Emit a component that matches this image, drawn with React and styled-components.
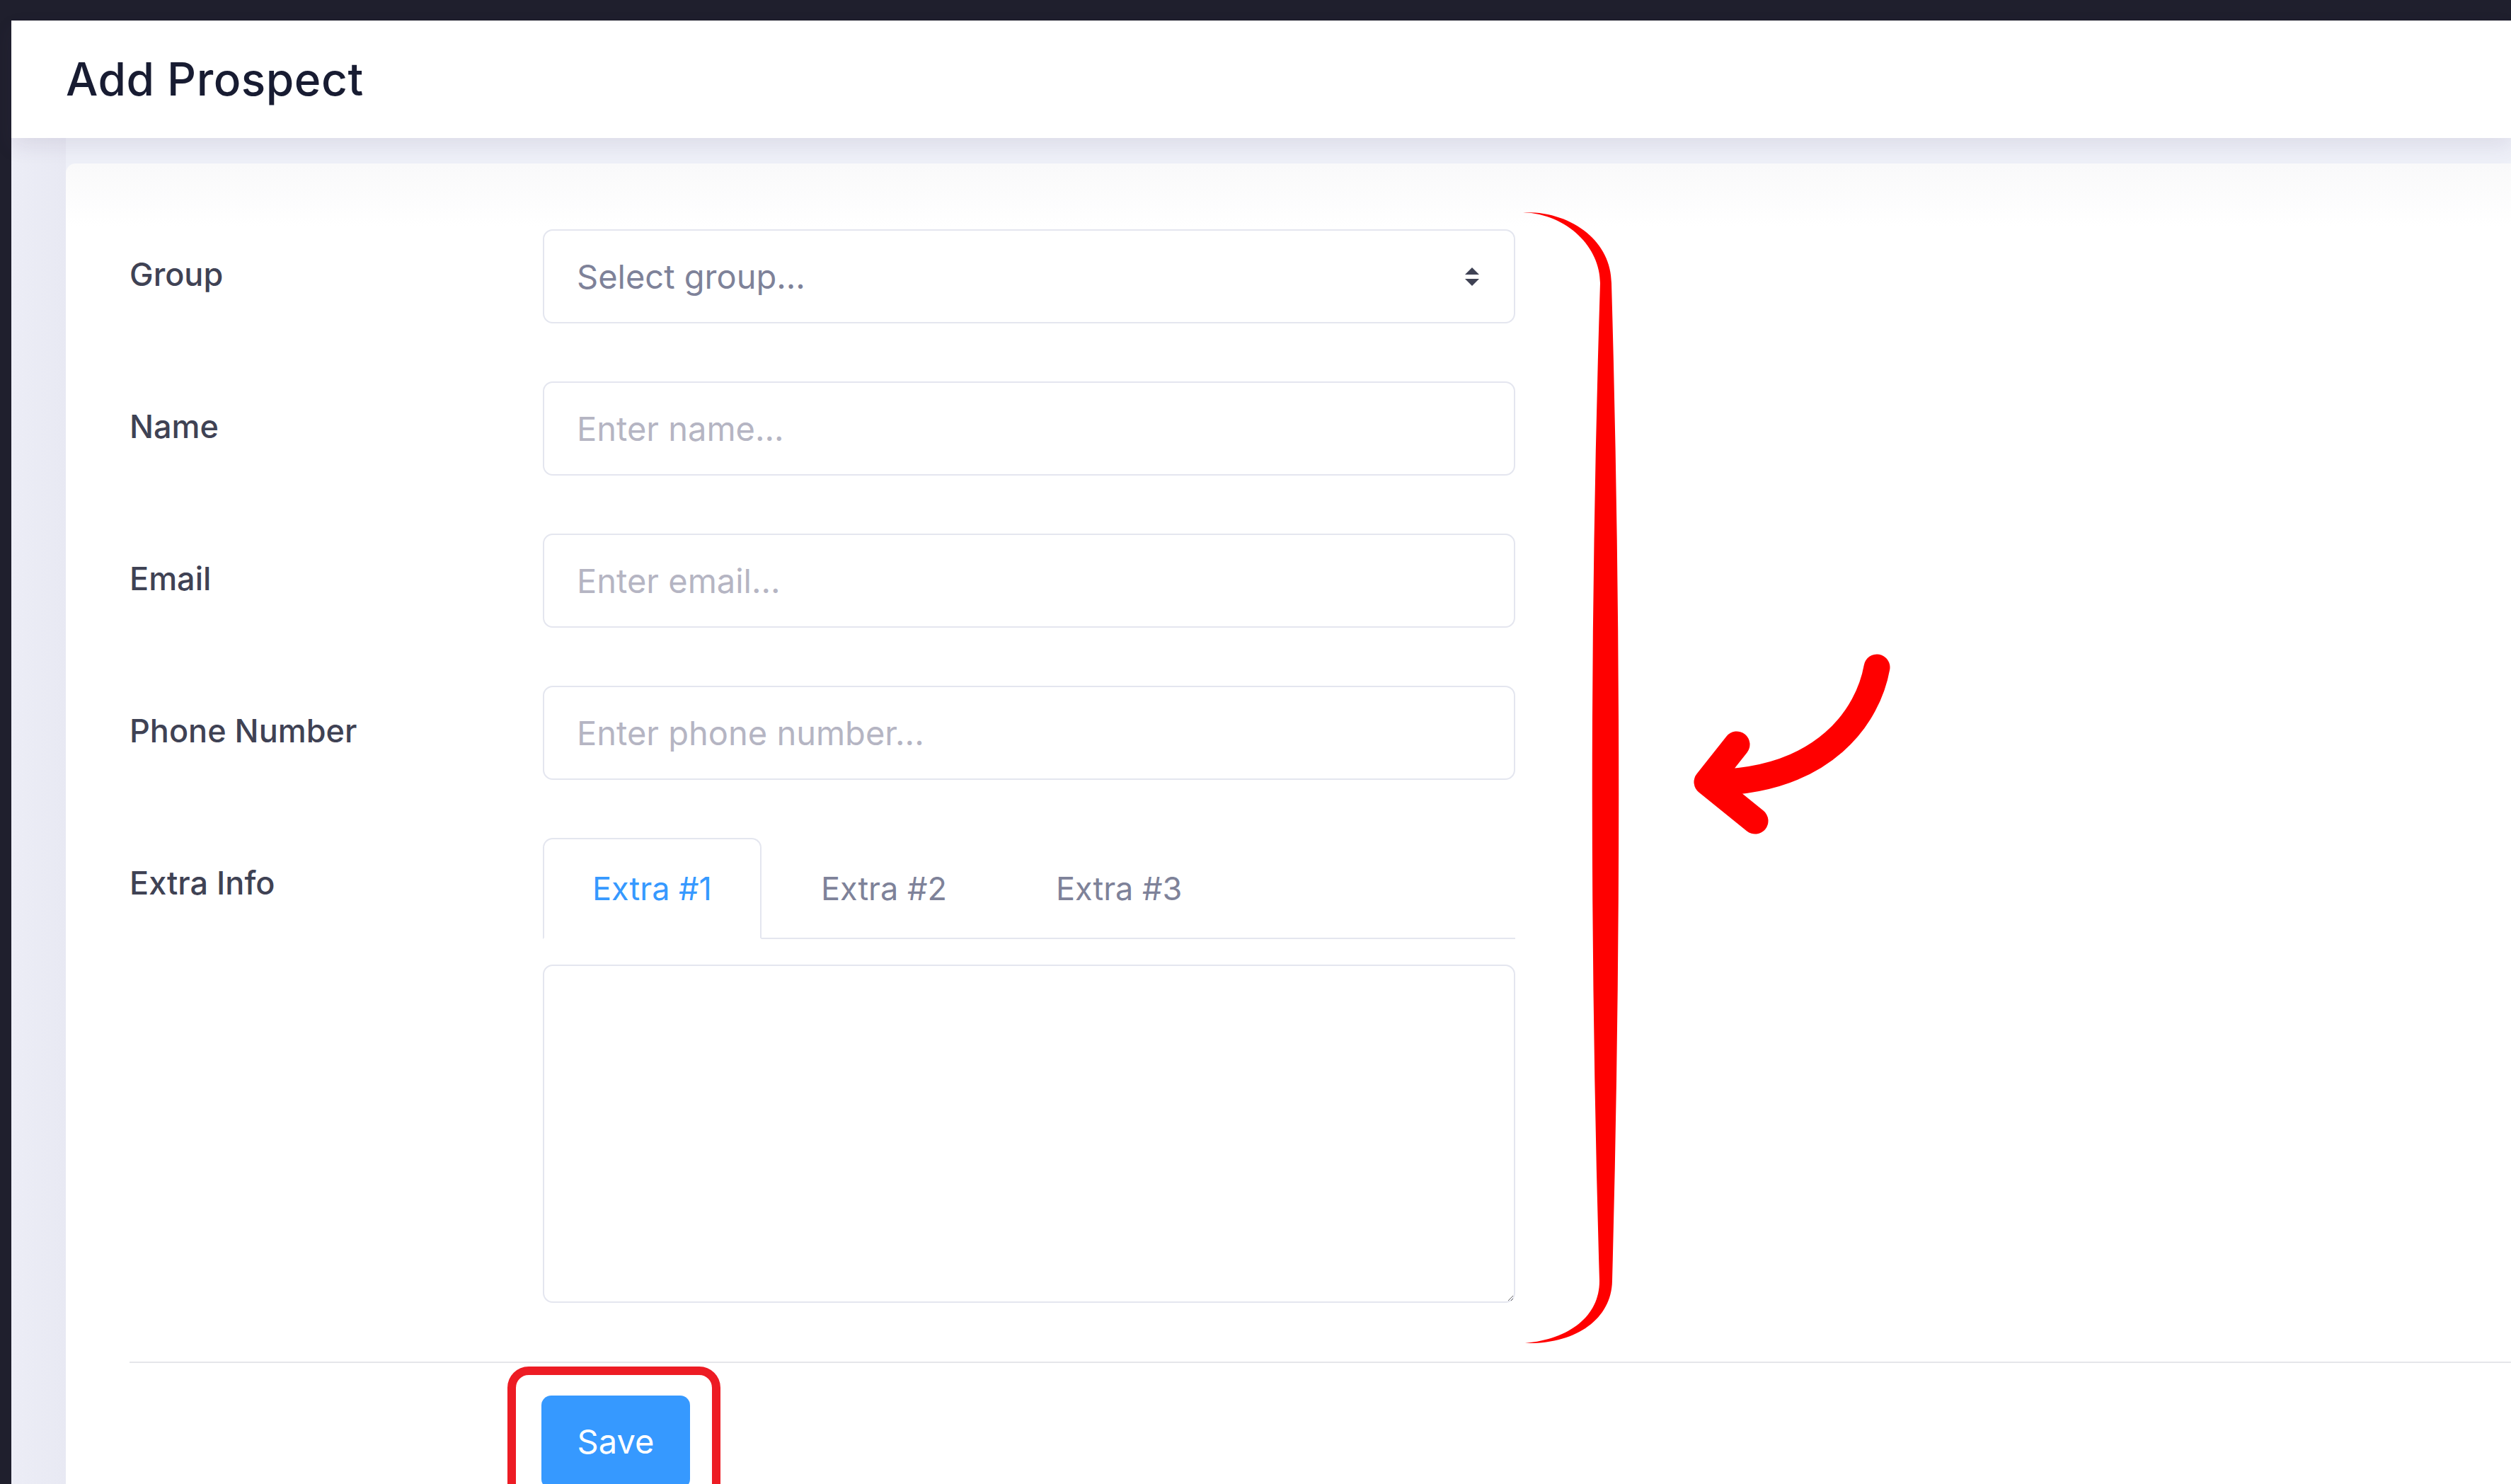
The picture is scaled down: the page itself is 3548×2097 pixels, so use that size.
import React from "react";
import styled, { createGlobalStyle } from "styled-components";

const GlobalStyle = createGlobalStyle`
  html, body {
    margin: 0;
    padding: 0;
    background: #1e1e2d;
    font-family: Inter, "Noto Sans", sans-serif;
  }
  * { box-sizing: border-box; }
`;

const Page = styled.div`
  position: relative;
  min-height: 100vh;
  overflow: hidden;
  background: #1e1e2d;
`;

const TopBar = styled.div`
  height: 29px;
  background: #1f1f2d;
`;

const Body = styled.div`
  display: flex;
  min-height: calc(100vh - 29px);
`;

const Aside = styled.div`
  width: 16px;
  flex: none;
  background: #1f1f2d;
`;

const Main = styled.div`
  flex: 1;
  display: flex;
  flex-direction: column;
  background: #eef0f8;
`;

const Header = styled.header`
  height: 166px;
  display: flex;
  align-items: center;
  padding-left: 77px;
  background: #fff;
  box-shadow: 0 12px 26px rgba(82, 63, 105, 0.1);
  position: relative;
  z-index: 1;
`;

const Title = styled.h1`
  margin: 0;
  font-size: 64px;
  line-height: 1;
  font-weight: 500;
  color: #181c32;
  letter-spacing: 0.5px;
`;

const Content = styled.main`
  flex: 1;
  padding: 36px 0 0 77px;
  background: linear-gradient(90deg, #ecedf6 0px, #e8e9f3 77px, #eef0f8 77px);
`;

const Card = styled.section`
  min-height: 100%;
  background: linear-gradient(180deg, #f9f9fa 0px, #ffffff 90px);
  border-radius: 14px 0 0 0;
  padding: 93px 0 0 90px;
`;

const Form = styled.div`
  display: grid;
  grid-template-columns: 584px 1374px;
  row-gap: 82px;
`;

const Label = styled.label`
  height: 133px;
  padding-bottom: 6px;
  display: flex;
  align-items: center;
  font-size: 45px;
  font-weight: 500;
  color: #3f4254;
`;

const fieldBase = `
  width: 100%;
  border: 2px solid #e4e6ef;
  border-radius: 14px;
  background: #fff;
  font-family: Inter, "Noto Sans", sans-serif;
  font-size: 47px;
  outline: none;
`;

const Input = styled.input`
  ${fieldBase}
  height: 133px;
  padding: 0 46px;
  color: #3f4254;
  &::placeholder {
    color: #b5b5c3;
  }
`;

const SelectBox = styled.div`
  ${fieldBase}
  height: 133px;
  padding: 0 48px 0 46px;
  display: flex;
  align-items: center;
  justify-content: space-between;
  color: #7e8299;
`;

const Field = styled.div`
  display: flex;
  flex-direction: column;
`;

const TabList = styled.div`
  display: flex;
  height: 143px;
  border-bottom: 2px solid #e4e6ef;
`;

const Tab = styled.button`
  height: 143px;
  margin: 0 14px -2px 0;
  padding: 0 68px;
  border: 2px solid ${(p) => (p.$active ? "#e4e6ef" : "transparent")};
  border-bottom-color: ${(p) => (p.$active ? "#fff" : "transparent")};
  border-radius: 14px 14px 0 0;
  background: ${(p) => (p.$active ? "#fff" : "transparent")};
  color: ${(p) => (p.$active ? "#3699ff" : "#7e8299")};
  font-family: Inter, "Noto Sans", sans-serif;
  font-size: 45px;
  cursor: pointer;
`;

const TextArea = styled.textarea`
  ${fieldBase}
  margin-top: 36px;
  height: 478px;
  resize: vertical;
  padding: 30px 46px;
  color: #3f4254;
`;

const Separator = styled.hr`
  margin: 83px 0 0 0;
  border: 0;
  height: 2px;
  background: #e5e6ea;
`;

const Actions = styled.div`
  padding: 46px 0 0 582px;
`;

const SaveWrap = styled.div`
  position: relative;
  display: inline-block;
`;

const SaveButton = styled.button`
  width: 210px;
  height: 132px;
  border: 0;
  border-radius: 14px;
  background: #3699ff;
  color: #fff;
  font-family: Inter, "Noto Sans", sans-serif;
  font-size: 47px;
  padding-bottom: 4px;
  cursor: pointer;
`;

const Highlight = styled.span`
  position: absolute;
  left: -48px;
  top: -41px;
  width: 301px;
  height: 260px;
  border: 12px solid #ed1c24;
  border-radius: 30px;
  pointer-events: none;
`;

const Overlay = styled.svg`
  position: absolute;
  left: 0;
  top: 0;
  pointer-events: none;
`;

function SortIcon() {
  return (
    <svg width="22" height="30" viewBox="0 0 22 30">
      <path d="M11 2 L21 12 H1 Z" fill="#3f4254" />
      <path d="M11 28 L21 18 H1 Z" fill="#3f4254" />
    </svg>
  );
}

function Annotations() {
  return (
    <Overlay width="3548" height="2097" viewBox="0 0 3548 2097">
      <path
        d="M2152 300 C2222 298 2277 342 2277 400 Q2297 1100 2278 1810 C2277 1865 2225 1900 2155 1898 C2218 1892 2260 1860 2260 1810 Q2239 1100 2261 400 C2261 350 2216 303 2152 300 Z"
        fill="#ff0000"
      />
      <path
        d="M2652 943 C2640 1010 2580 1103 2420 1106 M2454 1052 L2412 1105 L2480 1160"
        fill="none"
        stroke="#ff0000"
        strokeWidth="37"
        strokeLinecap="round"
        strokeLinejoin="round"
      />
    </Overlay>
  );
}

export default function App() {
  const [tab, setTab] = React.useState(0);
  const tabs = ["Extra #1", "Extra #2", "Extra #3"];

  return (
    <>
      <GlobalStyle />
      <Page>
        <TopBar />
        <Body>
          <Aside />
          <Main>
            <Header>
              <Title>Add Prospect</Title>
            </Header>
            <Content>
              <Card>
                <Form>
                  <Label>Group</Label>
                  <SelectBox>
                    <span>Select group...</span>
                    <SortIcon />
                  </SelectBox>

                  <Label>Name</Label>
                  <Input placeholder="Enter name..." />

                  <Label>Email</Label>
                  <Input placeholder="Enter email..." />

                  <Label>Phone Number</Label>
                  <Input placeholder="Enter phone number..." />

                  <Label>Extra Info</Label>
                  <Field>
                    <TabList>
                      {tabs.map((t, i) => (
                        <Tab key={t} $active={tab === i} onClick={() => setTab(i)}>
                          {t}
                        </Tab>
                      ))}
                    </TabList>
                    <TextArea />
                  </Field>
                </Form>
                <Separator />
                <Actions>
                  <SaveWrap>
                    <Highlight />
                    <SaveButton>Save</SaveButton>
                  </SaveWrap>
                </Actions>
              </Card>
            </Content>
          </Main>
        </Body>
        <Annotations />
      </Page>
    </>
  );
}
